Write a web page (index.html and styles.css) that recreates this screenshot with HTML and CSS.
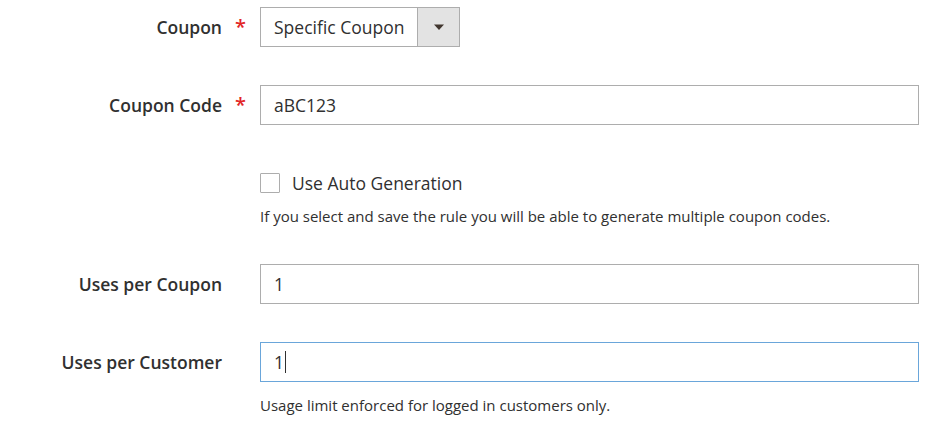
FILE: index.html
```html
<!DOCTYPE html>
<html>
<head>
<meta charset="utf-8">
<link rel="stylesheet" href="styles.css">
</head>
<body>
<form class="form">
  <div class="row row-select">
    <label class="label required">Coupon</label>
    <div class="control">
      <div class="select">
        <span class="select-value">Specific Coupon</span>
        <span class="select-btn"><svg width="12" height="8" viewBox="0 0 12 8"><path d="M1 1.5h10L6 7z" fill="#41362f"/></svg></span>
      </div>
    </div>
  </div>
  <div class="row row-code">
    <label class="label required">Coupon Code</label>
    <div class="control">
      <div class="input">aBC123</div>
    </div>
  </div>
  <div class="row row-auto">
    <div class="label"></div>
    <div class="control">
      <div class="check-line"><span class="checkbox"></span><span class="check-text">Use Auto Generation</span></div>
      <div class="note note-auto">If you select and save the rule you will be able to generate multiple coupon codes.</div>
    </div>
  </div>
  <div class="row row-uses">
    <label class="label">Uses per Coupon</label>
    <div class="control">
      <div class="input">1</div>
    </div>
  </div>
  <div class="row row-cust">
    <label class="label">Uses per Customer</label>
    <div class="control">
      <div class="input focus">1<span class="caret"></span></div>
      <div class="note note-cust">Usage limit enforced for logged in customers only.</div>
    </div>
  </div>
</form>
</body>
</html>
```
FILE: styles.css
```css
html, body {
  margin: 0;
  padding: 0;
  background: #ffffff;
}
body {
  font-family: "Open Sans", "DejaVu Sans", sans-serif;
  color: #303030;
  width: 949px;
  height: 427px;
  overflow: hidden;
}
.form {
  display: flex;
  flex-direction: column;
  padding-top: 7px;
}
.row {
  display: grid;
  grid-template-columns: 260px 659px;
  align-items: start;
}
.label {
  position: relative;
  font-weight: 600;
  font-size: 17.5px;
  line-height: 40px;
  height: 40px;
  text-align: right;
  padding-right: 38px;
  color: #303030;
}
.label.required::after {
  content: "*";
  position: absolute;
  right: 14px;
  top: 0;
  color: #e22626;
  font-size: 20px;
  font-weight: 600;
}
.select {
  width: 200px;
  height: 40px;
  box-sizing: border-box;
  border: 1px solid #adadad;
  display: flex;
  align-items: stretch;
  font-size: 17.5px;
}
.select-value {
  flex: 1;
  padding-left: 13px;
  line-height: 38px;
}
.select-btn {
  width: 41px;
  background: #e3e3e3;
  border-left: 1px solid #adadad;
  display: flex;
  align-items: center;
  justify-content: center;
}
.input {
  height: 40px;
  box-sizing: border-box;
  border: 1px solid #adadad;
  padding-left: 13px;
  font-size: 17.5px;
  line-height: 38px;
  display: flex;
  align-items: center;
}
.input.focus {
  border-color: #6aa6da;
}
.caret {
  display: inline-block;
  width: 1px;
  height: 22px;
  background: #303030;
  margin-left: 1px;
}
.row-code { margin-top: 38px; }
.row-auto { margin-top: 48px; }
.row-uses { margin-top: 38px; }
.row-cust { margin-top: 38px; }
.row-auto .label { height: 0; }
.check-line {
  display: flex;
  align-items: center;
  height: 20px;
}
.checkbox {
  width: 20px;
  height: 20px;
  box-sizing: border-box;
  border: 1px solid #adadad;
  border-radius: 1px;
  background: #fff;
}
.check-text {
  margin-left: 12px;
  font-size: 17.5px;
}
.note {
  font-size: 15px;
  line-height: 20px;
}
.note-auto { margin-top: 13px; }
.note-cust { margin-top: 13px; }
```
